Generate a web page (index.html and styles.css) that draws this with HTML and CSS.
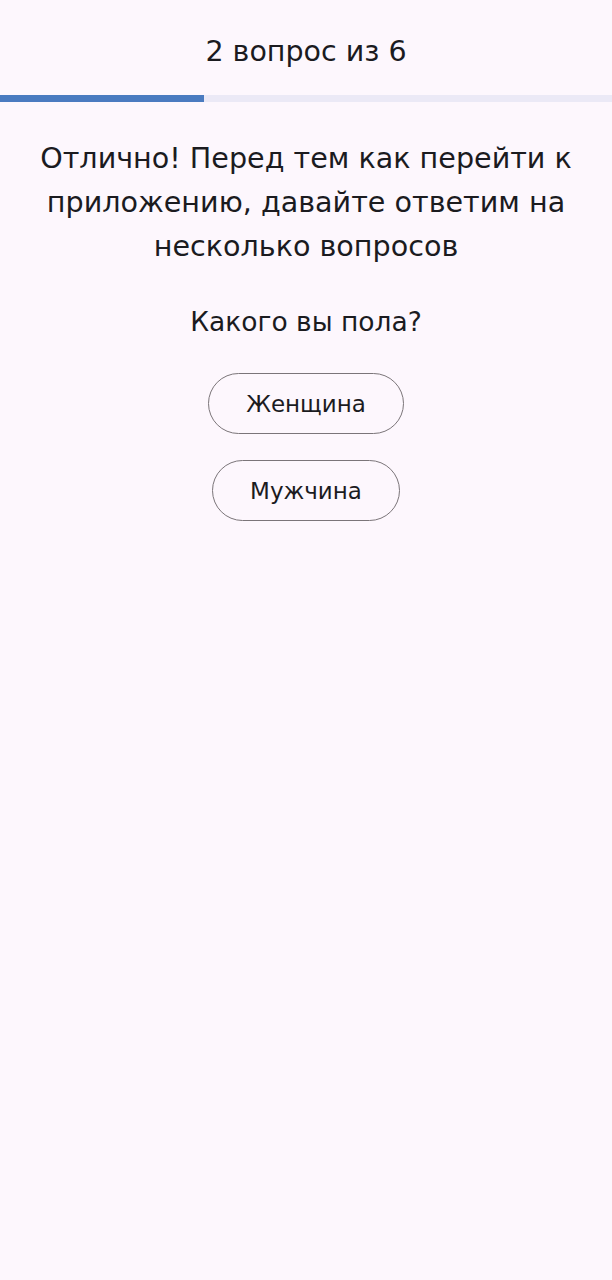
FILE: index.html
```html
<!DOCTYPE html>
<html lang="ru">
<head>
<meta charset="utf-8">
<link rel="stylesheet" href="styles.css">
</head>
<body>
<header class="header">
  <div class="counter">2 вопрос из 6</div>
</header>
<div class="progress"><div class="progress-fill" style="width: 33.333%"></div></div>
<main class="content">
  <h1 class="title">Отлично! Перед тем как перейти к приложению, давайте ответим на несколько вопросов</h1>
  <p class="question">Какого вы пола?</p>
  <div class="options">
    <button class="option">Женщина</button>
    <button class="option">Мужчина</button>
  </div>
</main>
</body>
</html>
```
FILE: styles.css
```css
html, body {
  margin: 0;
  padding: 0;
}
body {
  background: #fdf7fd;
  font-family: "DejaVu Sans", sans-serif;
  color: #1b1b1f;
  width: 612px;
  min-height: 1280px;
}
.header {
  height: 95px;
  display: flex;
  align-items: center;
  justify-content: center;
}
.counter {
  font-size: 28.5px;
  line-height: 36px;
  margin-top: 8px;
}
.progress {
  height: 7px;
  background: #ebe9f6;
}
.progress-fill {
  height: 100%;
  background: #4a7bc0;
}
.content {
  display: flex;
  flex-direction: column;
  align-items: center;
  padding: 34px 16px 0;
}
.title {
  margin: 0;
  font-weight: 400;
  font-size: 28.6px;
  line-height: 44px;
  text-align: center;
}
.question {
  margin: 38px 0 0;
  font-size: 26.5px;
  line-height: 32px;
}
.options {
  display: flex;
  flex-direction: column;
  align-items: center;
  gap: 26px;
  margin-top: 35px;
}
.option {
  font-family: inherit;
  font-size: 23px;
  color: #1b1b1f;
  background: transparent;
  border: 1px solid #7b7579;
  border-radius: 31px;
  height: 61px;
  padding: 0 37px;
}
```
